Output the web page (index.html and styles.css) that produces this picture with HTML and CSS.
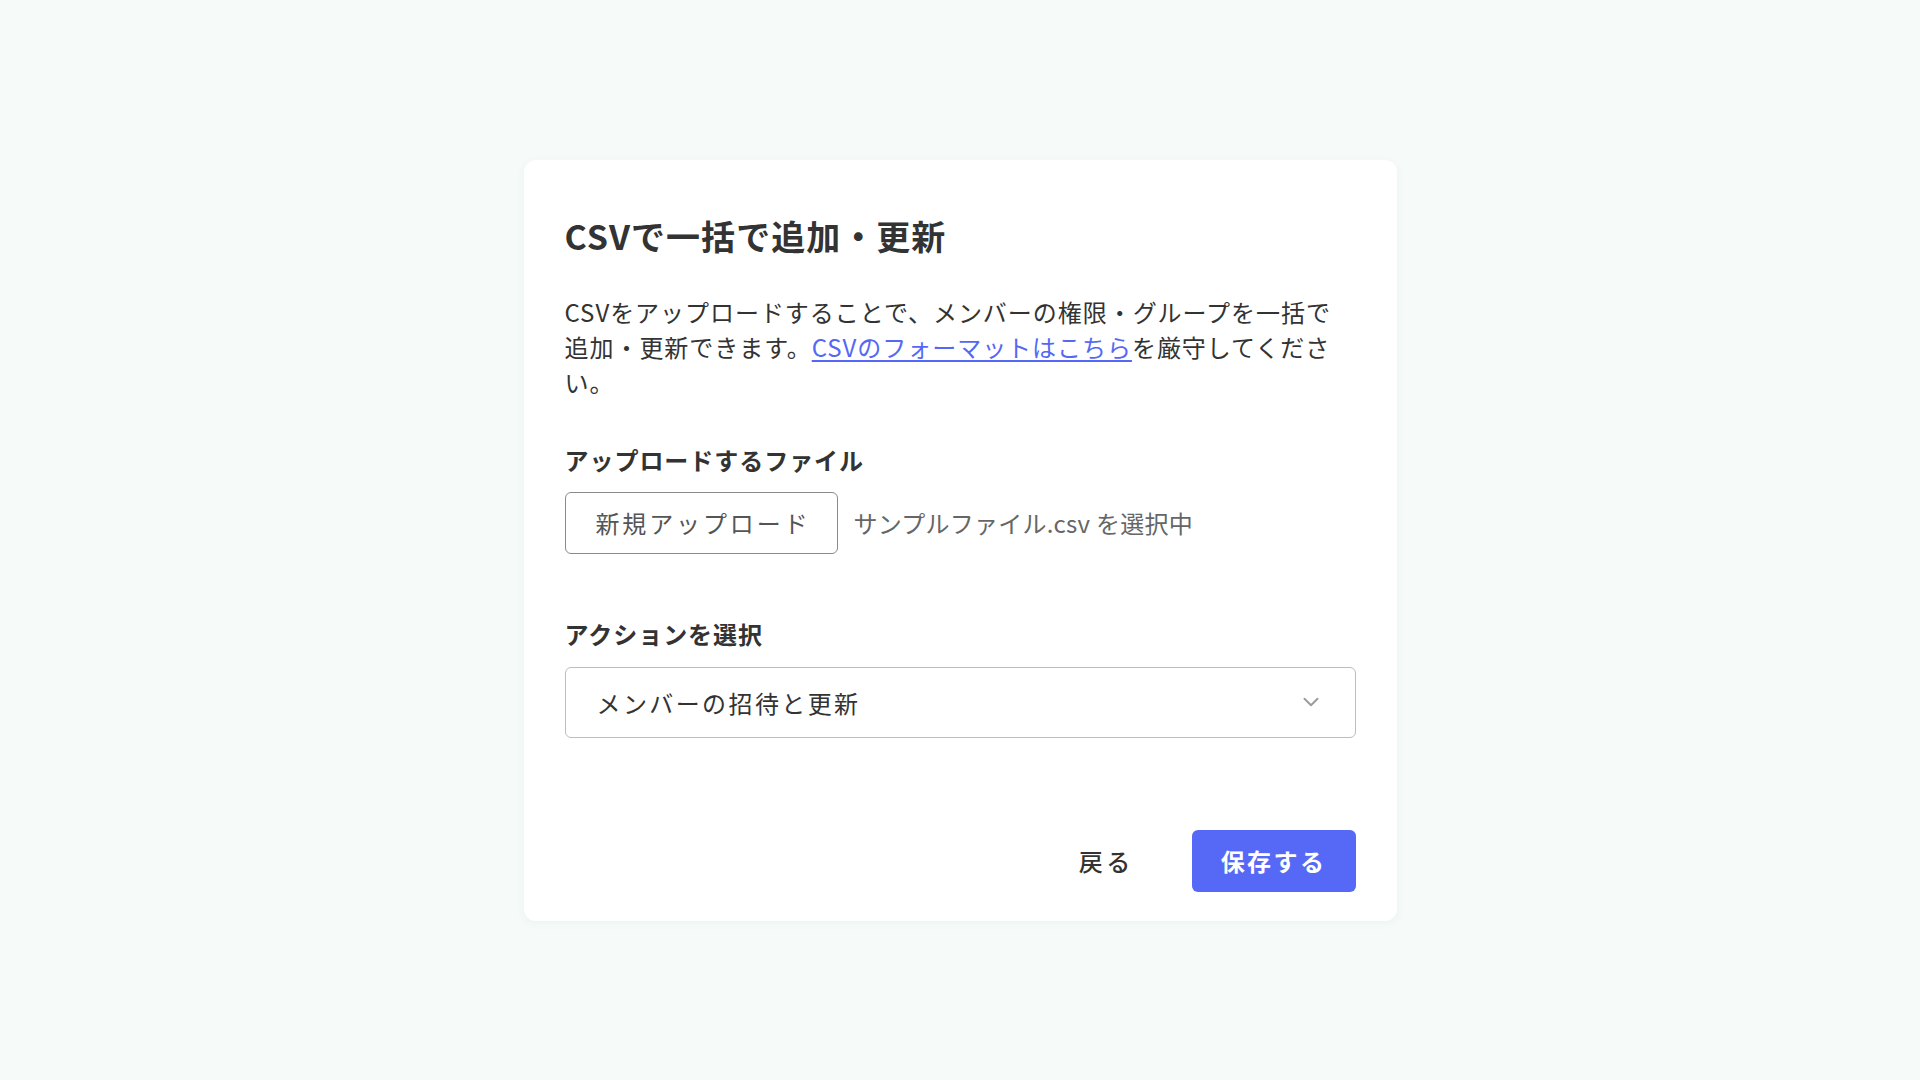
FILE: index.html
```html
<!DOCTYPE html>
<html lang="ja">
<head>
<meta charset="utf-8">
<title>CSVで一括で追加・更新</title>
<link rel="stylesheet" href="styles.css">
</head>
<body>
<main class="page">
  <section class="dialog">
    <h1 class="dialog-title">CSVで一括で追加・更新</h1>
    <p class="dialog-desc">CSVをアップロードすることで、メンバーの権限・グループを一括で追加・更新できます。<a href="#" class="link">CSVのフォーマットはこちら</a>を厳守してください。</p>

    <div class="field field-upload">
      <div class="field-label">アップロードするファイル</div>
      <div class="upload-row">
        <button class="btn btn-outline" type="button">新規アップロード</button>
        <span class="file-name">サンプルファイル.csv を選択中</span>
      </div>
    </div>

    <div class="field field-action">
      <div class="field-label">アクションを選択</div>
      <div class="select">
        <span class="select-value">メンバーの招待と更新</span>
        <svg class="select-chevron" width="16" height="10" viewBox="0 0 16 10" aria-hidden="true">
          <path d="M1.5 1.8 L8 8.2 L14.5 1.8" fill="none" stroke="#9c9c9c" stroke-width="2" stroke-linecap="round" stroke-linejoin="round"/>
        </svg>
      </div>
    </div>

    <div class="dialog-footer">
      <button class="btn btn-text" type="button">戻る</button>
      <button class="btn btn-primary" type="button">保存する</button>
    </div>
  </section>
</main>
</body>
</html>
```

FILE: styles.css
```css
* { box-sizing: border-box; }

html, body {
  margin: 0;
  padding: 0;
  height: 100%;
}

body {
  background: #f6fbfa;
  font-family: "Noto Sans CJK JP", "Noto Sans", sans-serif;
  color: #333333;
}

.page {
  min-height: 100vh;
  display: flex;
  align-items: center;
  justify-content: center;
}

.dialog {
  width: 873px;
  background: #ffffff;
  border-radius: 12px;
  box-shadow: 0 2px 10px rgba(40, 70, 60, 0.05);
  padding: 52px 41px 29px;
}

.dialog-title {
  margin: 0;
  font-size: 34px;
  line-height: 48px;
  font-weight: 700;
  letter-spacing: 0.03em;
  color: #333333;
}

.dialog-desc {
  margin: 34px 0 0;
  font-size: 24px;
  line-height: 35px;
  letter-spacing: 0.04em;
  color: #333333;
}

.link {
  color: #5468f5;
  text-decoration: underline;
  text-underline-offset: 3px;
  text-decoration-thickness: 2px;
}

.field-upload { margin-top: 43px; }
.field-action { margin-top: 62px; }

.field-label {
  font-size: 24px;
  line-height: 35px;
  font-weight: 700;
  letter-spacing: 0.04em;
  color: #333333;
}

.upload-row {
  margin-top: 15px;
  display: flex;
  align-items: center;
  gap: 16px;
}

.btn {
  font-family: inherit;
  font-size: 24px;
  line-height: 35px;
  height: 62px;
  padding: 0 30px;
  border-radius: 6px;
  letter-spacing: 0.12em;
  display: inline-flex;
  align-items: center;
  justify-content: center;
  cursor: pointer;
  background: none;
  border: none;
}

.btn-outline {
  width: 273px;
  border: 1.5px solid #8a8a8a;
  background: #ffffff;
  color: #555555;
  padding: 0 0 0 4px;
}

.file-name {
  font-size: 24px;
  line-height: 35px;
  letter-spacing: 0.01em;
  color: #666666;
}

.select {
  margin-top: 16px;
  height: 71px;
  border: 1.5px solid #bdbdbd;
  border-radius: 6px;
  display: flex;
  align-items: center;
  justify-content: space-between;
  padding: 0 36px 0 31px;
}

.select-value {
  font-size: 24px;
  line-height: 35px;
  letter-spacing: 0.1em;
  color: #333333;
}

.select-chevron {
  display: block;
}

.dialog-footer {
  margin-top: 92px;
  display: flex;
  justify-content: flex-end;
  align-items: center;
  gap: 28px;
}

.btn-text {
  color: #333333;
  font-weight: 500;
  letter-spacing: 0.14em;
}

.btn-primary {
  width: 164px;
  padding: 0;
  background: #5569f6;
  color: #ffffff;
  font-weight: 700;
  letter-spacing: 0.1em;
}
```
